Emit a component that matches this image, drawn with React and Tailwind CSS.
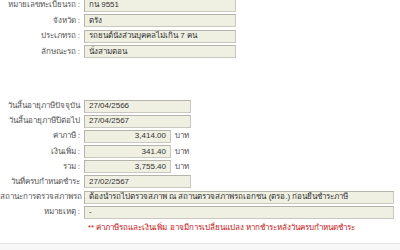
import React from 'react';

const Row = ({ label, children }) => (
  <div className="flex items-center h-[13px]">
    <div className="w-[84px] shrink-0 pr-[4px] text-right text-[#555] whitespace-nowrap">{label}</div>
    {children}
  </div>
);

const Box = ({ w, right, children }) => (
  <div
    className={`h-[13px] ${w} border border-[#c8c8c0] border-t-[#b4b4ac] border-l-[#b4b4ac] bg-[#efefe2] px-[4px] flex items-center text-[#333] whitespace-nowrap overflow-hidden ${right ? 'justify-end' : ''}`}
  >
    {children}
  </div>
);

const App = () => {
  const top = [
    ['หมายเลขทะเบียนรถ :', 'กน 9551'],
    ['จังหวัด :', 'ตรัง'],
    ['ประเภทรถ :', 'รถยนต์นั่งส่วนบุคคลไม่เกิน 7 คน'],
    ['ลักษณะรถ :', 'นั่งสามตอน'],
  ];

  const money = [
    ['ค่าภาษี :', '3,414.00'],
    ['เงินเพิ่ม :', '341.40'],
    ['รวม :', '3,755.40'],
  ];

  return (
    <div className="w-[400px] h-[250px] overflow-hidden bg-white text-[8px] leading-none" style={{ fontFamily: '"Liberation Sans", "Noto Sans", sans-serif' }}>
      {/* vehicle info */}
      <div className="flex flex-col gap-[2.5px] mt-[-1.5px]">
        {top.map(([l, v]) => (
          <Row key={l} label={l}>
            <Box w="w-[152px]">{v}</Box>
          </Row>
        ))}
      </div>

      {/* tax info */}
      <div className="flex flex-col gap-[2.2px] mt-[41.5px]">
        <Row label="วันสิ้นอายุภาษีปัจจุบัน">
          <Box w="w-[107px]">27/04/2566</Box>
        </Row>
        <Row label="วันสิ้นอายุภาษีปีต่อไป">
          <Box w="w-[107px]">27/04/2567</Box>
        </Row>
        {money.map(([l, v]) => (
          <Row key={l} label={l}>
            <Box w="w-[87px]" right>{v}</Box>
            <span className="ml-[4px] text-[#555]">บาท</span>
          </Row>
        ))}
        <Row label="วันที่ครบกำหนดชำระ">
          <Box w="w-[107px]">27/02/2567</Box>
        </Row>
        <Row label="สถานะการตรวจสภาพรถ">
          <Box w="w-[310px]">ต้องนำรถไปตรวจสภาพ ณ สถานตรวจสภาพรถเอกชน (ตรอ.) ก่อนยื่นชำระภาษี</Box>
        </Row>
        <Row label="หมายเหตุ :">
          <Box w="w-[310px]">-</Box>
        </Row>
        <div className="flex items-center h-[13px] pl-[88px] text-[#cc1111] whitespace-nowrap">
          ** ค่าภาษีรถและเงินเพิ่ม อาจมีการเปลี่ยนแปลง หากชำระหลังวันครบกำหนดชำระ
        </div>
      </div>

      <div className="mt-[9px] h-[20px] border-t border-[#e4e4e4] bg-[#f7f7f7]" />
    </div>
  );
};

export default App;
